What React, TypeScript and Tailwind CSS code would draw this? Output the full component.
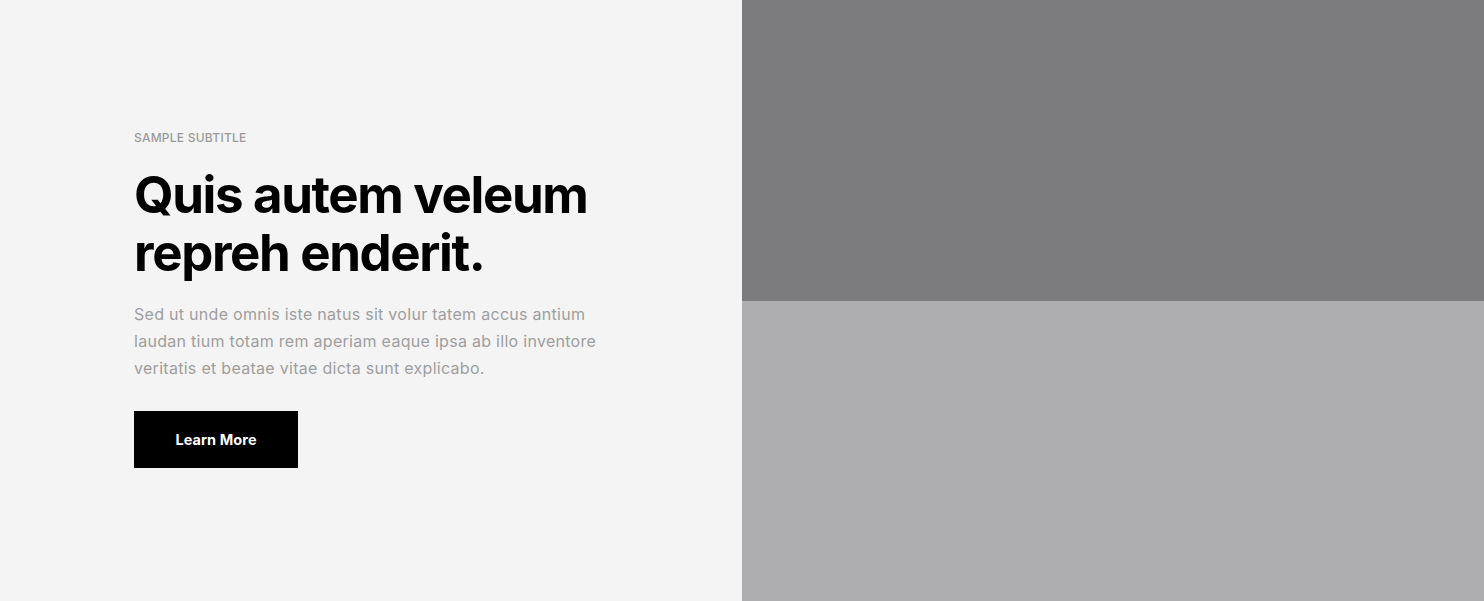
export default function App() {
  return (
    <div className="flex h-[601px] w-full" style={{ fontFamily: "Inter, 'Noto Sans', sans-serif" }}>
      <div className="flex w-1/2 flex-col bg-[#f4f4f4] pl-[134px] pt-[130px]">
        <div className="text-[12px] font-medium uppercase leading-[16px] tracking-[0.02em] text-[#9a9a9a]">Sample Subtitle</div>
        <h1 className="mt-[20px] w-[490px] text-[51px] font-bold leading-[58px] tracking-[-0.027em] text-black">
          Quis autem veleum repreh enderit.
        </h1>
        <p className="mt-[19px] w-[490px] text-[16px] leading-[27px] tracking-[0.018em] text-[#9e9e9e]">
          Sed ut unde omnis iste natus sit volur tatem accus antium laudan tium totam rem aperiam eaque ipsa ab illo inventore veritatis et beatae vitae dicta sunt explicabo.
        </p>
        <div className="mt-[29px]">
          <button className="flex h-[57px] w-[164px] items-center justify-center bg-black text-[14.5px] font-bold tracking-[0.005em] text-white">
            Learn More
          </button>
        </div>
      </div>
      <div className="flex w-1/2 flex-col">
        <div className="h-[301px] bg-[#7b7b7d]" />
        <div className="flex-1 bg-[#aeaeb0]" />
      </div>
    </div>
  );
}
